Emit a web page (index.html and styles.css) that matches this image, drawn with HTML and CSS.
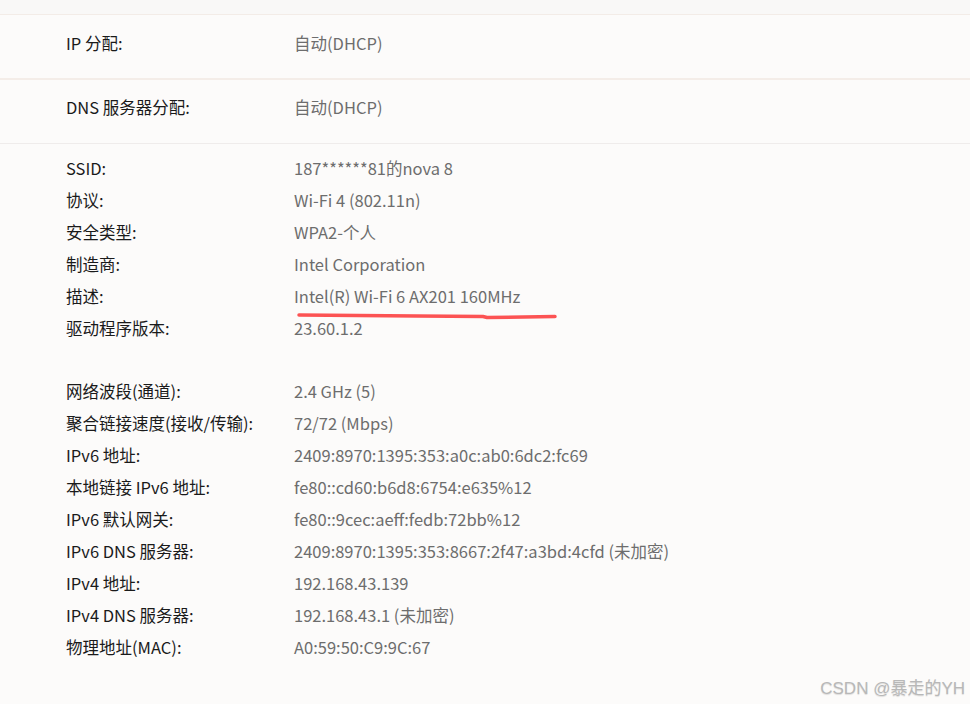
FILE: index.html
```html
<!DOCTYPE html>
<html lang="zh-CN">
<head>
    <meta charset="UTF-8">
    <title>WLAN 属性</title>
    <link rel="stylesheet" href="styles.css">
</head>
<body>
    <div class="page">
        <div class="setting-row">
            <span class="label">IP 分配:</span>
            <span class="value">自动(DHCP)</span>
        </div>
        <div class="setting-row">
            <span class="label">DNS 服务器分配:</span>
            <span class="value">自动(DHCP)</span>
        </div>

        <div class="props">
            <div class="prop-group">
                <div class="prop"><span class="label">SSID:</span><span class="value">187******81的nova 8</span></div>
                <div class="prop"><span class="label">协议:</span><span class="value">Wi-Fi 4 (802.11n)</span></div>
                <div class="prop"><span class="label">安全类型:</span><span class="value">WPA2-个人</span></div>
                <div class="prop"><span class="label">制造商:</span><span class="value">Intel Corporation</span></div>
                <div class="prop marked">
                    <span class="label">描述:</span>
                    <span class="value">Intel(R) Wi-Fi 6 AX201 160MHz</span>
                    <!-- hand-drawn red underline -->
                    <svg class="scribble" width="264" height="10" viewBox="0 0 264 10">
                        <path d="M2 3 L120 4 L186 4.5 L190 5.5 L258 4.5" fill="none" stroke="#fc5353" stroke-width="3.5" stroke-linecap="round" stroke-linejoin="round"/>
                    </svg>
                </div>
                <div class="prop"><span class="label">驱动程序版本:</span><span class="value">23.60.1.2</span></div>
            </div>

            <div class="prop-group">
                <div class="prop"><span class="label">网络波段(通道):</span><span class="value">2.4 GHz (5)</span></div>
                <div class="prop"><span class="label">聚合链接速度(接收/传输):</span><span class="value">72/72 (Mbps)</span></div>
                <div class="prop"><span class="label">IPv6 地址:</span><span class="value">2409:8970:1395:353:a0c:ab0:6dc2:fc69</span></div>
                <div class="prop"><span class="label">本地链接 IPv6 地址:</span><span class="value">fe80::cd60:b6d8:6754:e635%12</span></div>
                <div class="prop"><span class="label">IPv6 默认网关:</span><span class="value">fe80::9cec:aeff:fedb:72bb%12</span></div>
                <div class="prop"><span class="label">IPv6 DNS 服务器:</span><span class="value">2409:8970:1395:353:8667:2f47:a3bd:4cfd (未加密)</span></div>
                <div class="prop"><span class="label">IPv4 地址:</span><span class="value">192.168.43.139</span></div>
                <div class="prop"><span class="label">IPv4 DNS 服务器:</span><span class="value">192.168.43.1 (未加密)</span></div>
                <div class="prop"><span class="label">物理地址(MAC):</span><span class="value">A0:59:50:C9:9C:67</span></div>
            </div>
        </div>
    </div>

    <div class="watermark">CSDN @暴走的YH</div>
</body>
</html>
```

FILE: styles.css
```css
* {
    margin: 0;
    padding: 0;
    box-sizing: border-box;
}

body {
    background: #f9f8f7;
    color: #1a1a1a;
    font-family: "Noto Sans CJK SC", "Noto Sans", sans-serif;
    font-size: 16.5px;
    height: 704px;
    overflow: hidden;
    position: relative;
}

.page {
    padding-top: 14px;
}

/* Top setting cards */
.setting-row {
    display: flex;
    align-items: center;
    height: 64px;
    padding: 0 0 8px 66px;
    background: #fcfbfa;
    border-top: 1px solid #f3ece7;
}

.setting-row + .setting-row {
    height: 65px;
    padding-bottom: 10px;
    border-top: 2px solid #f4ede8;
}

.label {
    width: 228px;
    flex-shrink: 0;
    white-space: nowrap;
}

.value {
    color: #6d6d6d;
    white-space: nowrap;
}

/* Property list */
.props {
    background: #fcfbfa;
    border-top: 1px solid #efeceb;
    padding: 8px 0 40px 66px;
    height: 562px;
}

.prop-group + .prop-group {
    margin-top: 31px;
}

.prop {
    display: flex;
    height: 32px;
    line-height: 32px;
}

.marked {
    position: relative;
}

.scribble {
    position: absolute;
    left: 231px;
    top: 32px;
}

.watermark {
    position: absolute;
    right: 5px;
    bottom: 5px;
    font-family: "Liberation Sans", "Noto Sans CJK SC", sans-serif;
    font-size: 17px;
    color: #b8b8b8;
    text-shadow: 0 1px 1px rgba(0, 0, 0, 0.12);
}
```
